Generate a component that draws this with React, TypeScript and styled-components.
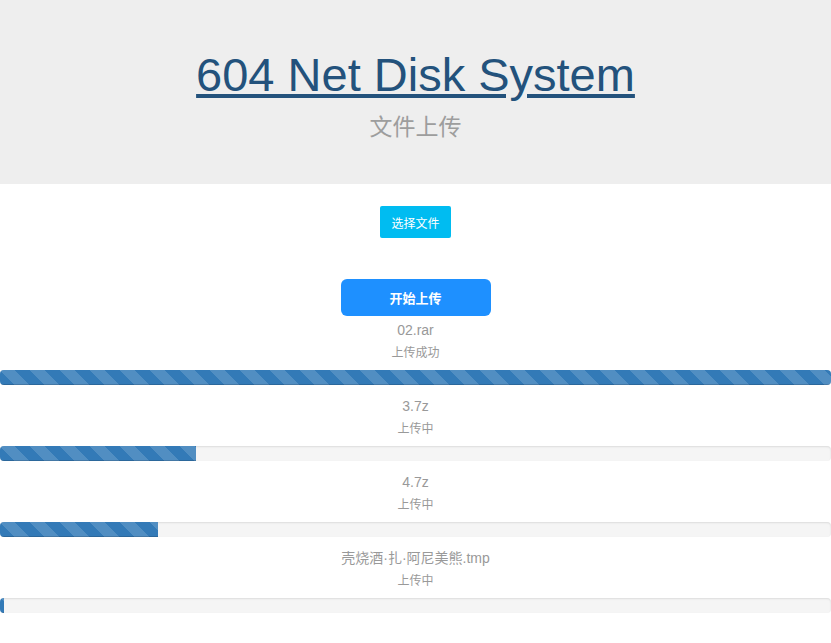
import React from "react";
import styled, { createGlobalStyle } from "styled-components";

const Global = createGlobalStyle`
  html, body { margin: 0; padding: 0; background: #fff; }
  body { font-family: "Liberation Sans", "Noto Sans CJK SC", sans-serif; }
`;

const Header = styled.header`
  background: #eeeeee;
  padding: 47px 0 41px;
  text-align: center;
`;

const Title = styled.h1`
  margin: 0;
  font-size: 47px;
  line-height: 56px;
  font-weight: normal;
  a {
    color: #23527c;
    text-decoration: underline;
  }
`;

const Subtitle = styled.p`
  margin: 8px 0 0;
  font-size: 23px;
  line-height: 32px;
  color: #9d9d9d;
`;

const Main = styled.main`
  padding-top: 22px;
  display: flex;
  flex-direction: column;
  align-items: center;
`;

const PickButton = styled.button`
  width: 71px;
  height: 32px;
  border: none;
  border-radius: 2px;
  background: #00bcf1;
  color: #fff;
  font-family: inherit;
  font-size: 12px;
  padding: 0;
  cursor: pointer;
`;

const StartButton = styled.button`
  margin-top: 41px;
  width: 150px;
  height: 37px;
  border: none;
  border-radius: 6px;
  background: #1e90ff;
  color: #fff;
  font-family: inherit;
  font-size: 13px;
  font-weight: bold;
  padding: 0;
  cursor: pointer;
`;

const List = styled.div`
  margin-top: 4px;
  width: 100%;
  display: flex;
  flex-direction: column;
`;

const Item = styled.div`
  display: flex;
  flex-direction: column;
  align-items: stretch;
  margin-bottom: 11px;
  text-align: center;
`;

const FileName = styled.div`
  font-size: 14px;
  line-height: 20px;
  color: #999;
`;

const Status = styled.div`
  margin-top: 3px;
  font-size: 12px;
  line-height: 20px;
  color: #999;
`;

const Track = styled.div`
  margin-top: 7px;
  height: 15px;
  border-radius: 4px;
  background: #f5f5f5;
  box-shadow: inset 0 1px 2px rgba(0, 0, 0, 0.1);
  overflow: hidden;
`;

const Bar = styled.div`
  height: 100%;
  background-color: #337ab7;
  background-image: linear-gradient(
    45deg,
    rgba(255, 255, 255, 0.15) 25%,
    transparent 25%,
    transparent 50%,
    rgba(255, 255, 255, 0.15) 50%,
    rgba(255, 255, 255, 0.15) 75%,
    transparent 75%,
    transparent
  );
  background-size: 30px 30px;
  box-shadow: inset 0 -1px 0 rgba(0, 0, 0, 0.15);
`;

const files = [
  { name: "02.rar", status: "上传成功", pct: 100 },
  { name: "3.7z", status: "上传中", pct: 23.6 },
  { name: "4.7z", status: "上传中", pct: 19 },
  { name: "壳烧酒·扎·阿尼美熊.tmp", status: "上传中", pct: 0.5 },
];

export default function App() {
  return (
    <>
      <Global />
      <Header>
        <Title>
          <a href="#">604 Net Disk System</a>
        </Title>
        <Subtitle>文件上传</Subtitle>
      </Header>
      <Main>
        <PickButton>选择文件</PickButton>
        <StartButton>开始上传</StartButton>
        <List>
          {files.map((f) => (
            <Item key={f.name}>
              <FileName>{f.name}</FileName>
              <Status>{f.status}</Status>
              <Track>
                <Bar style={{ width: `${f.pct}%` }} />
              </Track>
            </Item>
          ))}
        </List>
      </Main>
    </>
  );
}
